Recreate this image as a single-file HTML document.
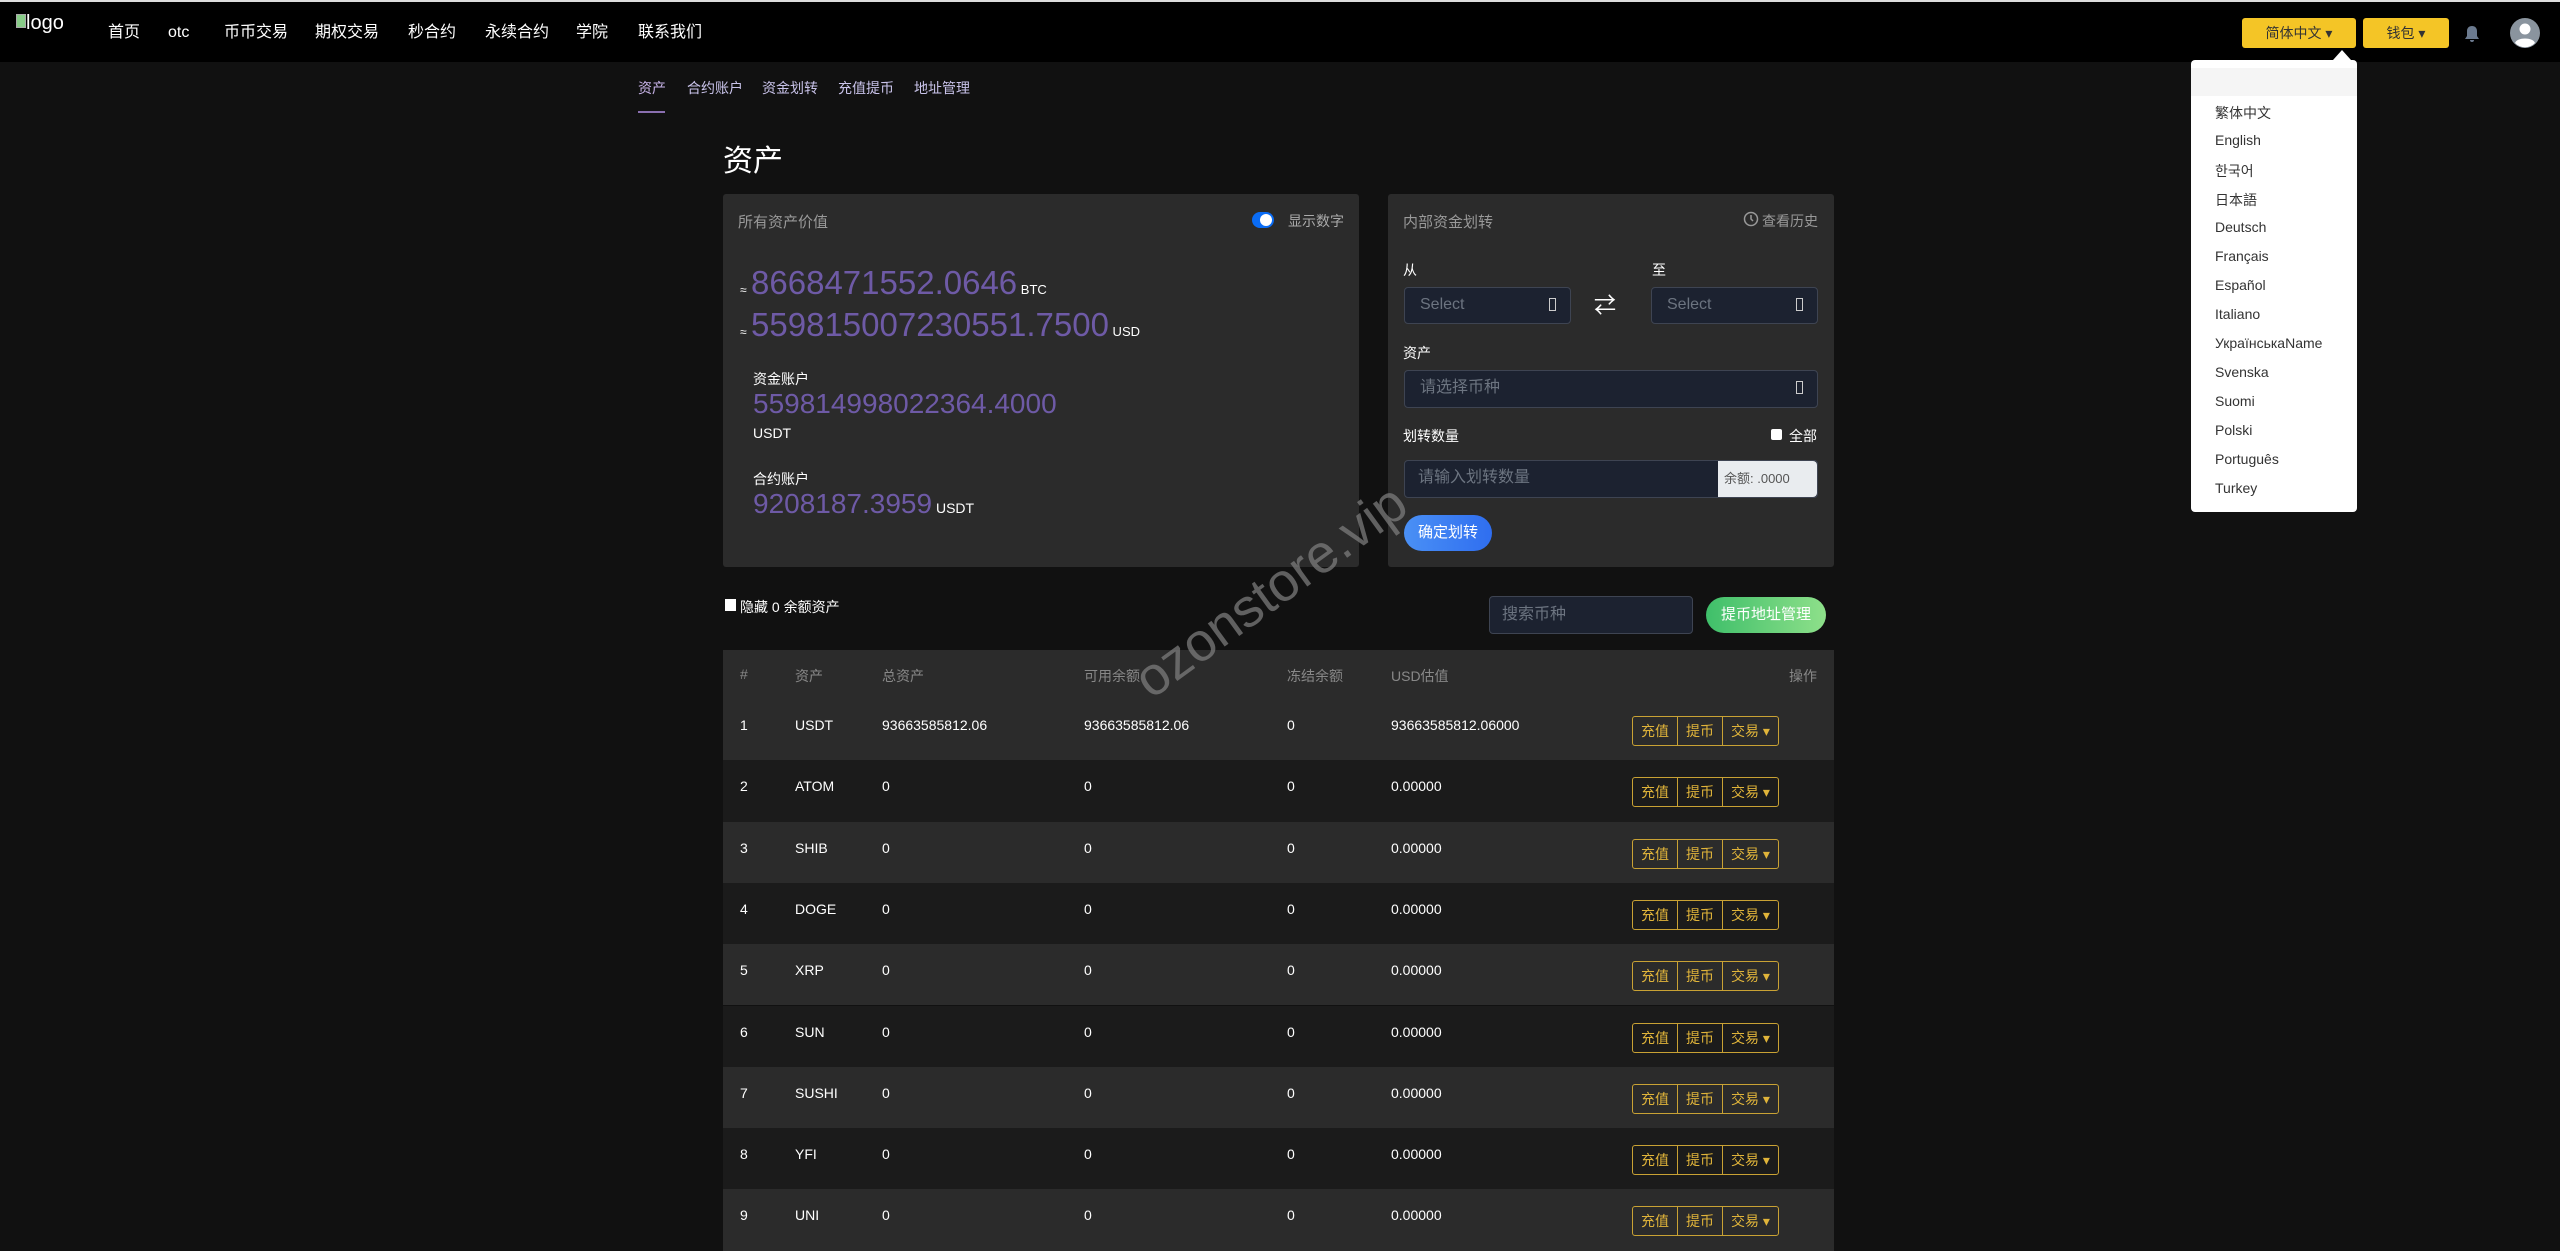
<!DOCTYPE html>
<html><head><meta charset="utf-8">
<style>
*{box-sizing:border-box;margin:0;padding:0}
body{width:2560px;height:1230px;overflow:hidden;background:#111;font-family:"Liberation Sans","Noto Sans CJK SC",sans-serif;color:#fff;position:relative}
.abs{position:absolute}
.nav{left:0;top:0;width:2560px;height:62px;background:#000;border-top:2px solid #ddd}
.nav .it{position:absolute;top:20px;font-size:16px;line-height:22px;height:22px;color:#fff}
.sub{top:78px;font-size:14px;color:#c9c3ea}
.card{background:#2b2b2b;border-radius:3px}
.grey{color:#999}
.purple{color:#6e5aa6}
.sel{position:absolute;background:#1c2230;border:1px solid #3e4452;border-radius:4px;color:#6c7480;font-size:16px;padding-left:15px;line-height:34px}
.sel i{position:absolute;right:14px;top:10px;width:7px;height:13px;border:1.5px solid #ccc;font-style:normal}
.row{position:absolute;left:723px;width:1111px;height:61.3px;font-size:14px}
.row span{position:absolute;top:18px}
.bg{position:absolute;left:1632px;width:147px;height:30px;border:1px solid #c9a234;border-radius:3px;display:flex;font-size:14px;color:#e0b43a}
.bg div{height:28px;line-height:28px;text-align:center}
.dd div{position:absolute;left:24px;font-size:14px;color:#333}
</style></head><body>
<div class="abs nav">
  <div class="abs" style="left:16px;top:10px;font-size:20px;color:#fff"><span style="display:inline-block;width:10px;height:14px;border:1px solid #aaa;background:#8c8;vertical-align:top;margin-top:2px"></span>logo</div>
  <div class="it" style="left:108px">首页</div>
  <div class="it" style="left:168px">otc</div>
  <div class="it" style="left:224px">币币交易</div>
  <div class="it" style="left:315px">期权交易</div>
  <div class="it" style="left:408px">秒合约</div>
  <div class="it" style="left:485px">永续合约</div>
  <div class="it" style="left:576px">学院</div>
  <div class="it" style="left:638px">联系我们</div>
  <div class="abs" style="left:2242px;top:16px;width:114px;height:30px;background:#f4c526;border-radius:3px;color:#333;font-size:14px;text-align:center;line-height:30px">简体中文 ▾</div>
  <div class="abs" style="left:2363px;top:16px;width:86px;height:30px;background:#f4c526;border-radius:3px;color:#333;font-size:14px;text-align:center;line-height:30px">钱包 ▾</div>
  <svg class="abs" style="left:2464px;top:23px" width="16" height="18" viewBox="0 0 16 18"><path d="M8 1c-3 0-5 2-5 5v5l-2 3h14l-2-3V6c0-3-2-5-5-5z M6 15a2 2 0 0 0 4 0z" fill="#6b7a8f"/></svg>
  <svg class="abs" style="left:2510px;top:16px" width="30" height="30" viewBox="0 0 30 30"><circle cx="15" cy="15" r="15" fill="#8a949e"/><circle cx="15" cy="11" r="5.5" fill="#fff"/><path d="M5 25c2-6 18-6 20 0a14 14 0 0 1-20 0z" fill="#fff"/></svg>
</div>
<div class="abs sub" style="left:638px;color:#c9b5ea">资产</div>
<div class="abs" style="left:638px;top:111px;width:27px;height:2px;background:#8a6fb0"></div>
<div class="abs sub" style="left:687px">合约账户</div>
<div class="abs sub" style="left:762px">资金划转</div>
<div class="abs sub" style="left:838px">充值提币</div>
<div class="abs sub" style="left:914px">地址管理</div>
<div class="abs" style="left:723px;top:136px;font-size:30px">资产</div>

<div class="abs card" style="left:723px;top:194px;width:636px;height:373px"></div>
<div class="abs grey" style="left:738px;top:211px;font-size:15px">所有资产价值</div>
<div class="abs" style="left:1252px;top:212px;width:22px;height:16px;border-radius:8px;background:#0a6cf5"><div style="position:absolute;right:2px;top:2px;width:12px;height:12px;border-radius:6px;background:#fff"></div></div>
<div class="abs grey" style="left:1288px;top:211px;font-size:14px;color:#aaa">显示数字</div>
<div class="abs" style="left:740px;top:264px;white-space:nowrap"><span style="font-size:12px">≈</span> <span class="purple" style="font-size:33px">8668471552.0646</span><span style="font-size:13px"> BTC</span></div>
<div class="abs" style="left:740px;top:306px;white-space:nowrap"><span style="font-size:12px">≈</span> <span class="purple" style="font-size:33px">559815007230551.7500</span><span style="font-size:13px"> USD</span></div>
<div class="abs" style="left:753px;top:369px;font-size:14px">资金账户</div>
<div class="abs purple" style="left:753px;top:388px;font-size:28px">559814998022364.4000</div>
<div class="abs" style="left:753px;top:425px;font-size:14px">USDT</div>
<div class="abs" style="left:753px;top:469px;font-size:14px">合约账户</div>
<div class="abs" style="left:753px;top:488px;white-space:nowrap"><span class="purple" style="font-size:28px">9208187.3959</span><span style="font-size:14px"> USDT</span></div>

<div class="abs card" style="left:1388px;top:194px;width:446px;height:373px"></div>
<div class="abs grey" style="left:1403px;top:211px;font-size:15px">内部资金划转</div>
<svg class="abs" style="left:1743px;top:211px" width="16" height="16" viewBox="0 0 16 16"><circle cx="8" cy="8" r="6.5" fill="none" stroke="#999" stroke-width="1.5"/><path d="M8 4v4l2 2" stroke="#999" stroke-width="1.5" fill="none"/></svg>
<div class="abs grey" style="left:1762px;top:211px;font-size:14px">查看历史</div>
<div class="abs" style="left:1403px;top:260px;font-size:14px">从</div>
<div class="abs" style="left:1652px;top:260px;font-size:14px">至</div>
<div class="sel" style="left:1404px;top:287px;width:167px;height:37px">Select<i></i></div>
<div class="abs" style="left:1594px;top:288px;font-size:22px;color:#fff">⇄</div>
<div class="sel" style="left:1651px;top:287px;width:167px;height:37px">Select<i></i></div>
<div class="abs" style="left:1403px;top:343px;font-size:14px">资产</div>
<div class="sel" style="left:1404px;top:370px;width:414px;height:38px">请选择币种<i></i></div>
<div class="abs" style="left:1403px;top:426px;font-size:14px">划转数量</div>
<div class="abs" style="left:1771px;top:429px;width:11px;height:11px;background:#fff;border-radius:2px"></div>
<div class="abs" style="left:1789px;top:426px;font-size:14px">全部</div>
<div class="sel" style="left:1404px;top:460px;width:414px;height:38px;padding-left:13px">请输入划转数量</div>
<div class="abs" style="left:1718px;top:461px;width:99px;height:36px;background:#e9ecef;border-radius:0 4px 4px 0;color:#555;font-size:13px;line-height:36px;padding-left:6px">余额: .0000</div>
<div class="abs" style="left:1404px;top:515px;width:88px;height:36px;border-radius:18px;background:linear-gradient(90deg,#4a90f5,#2f6ef0);font-size:15px;line-height:36px;text-align:center">确定划转</div>

<div class="abs" style="left:725px;top:599px;width:11px;height:12px;background:#fff"></div>
<div class="abs" style="left:740px;top:597px;font-size:14px">隐藏 0 余额资产</div>
<div class="abs" style="left:1489px;top:596px;width:204px;height:38px;background:#1c2230;border:1px solid #3e4452;border-radius:4px;color:#6c7480;font-size:16px;line-height:36px;padding-left:12px">搜索币种</div>
<div class="abs" style="left:1706px;top:597px;width:120px;height:36px;border-radius:18px;background:linear-gradient(90deg,#3fbf6a,#8ee08a);font-size:15px;line-height:36px;text-align:center">提币地址管理</div>

<div class="abs" style="left:723px;top:650px;width:1111px;height:49px;background:#2b2b2b;font-size:14px;color:#888">
  <span class="abs" style="left:17px;top:16px">#</span><span class="abs" style="left:72px;top:16px">资产</span><span class="abs" style="left:159px;top:16px">总资产</span><span class="abs" style="left:361px;top:16px">可用余额</span><span class="abs" style="left:564px;top:16px">冻结余额</span><span class="abs" style="left:668px;top:16px">USD估值</span><span class="abs" style="right:17px;top:16px">操作</span>
</div>

<div class="row" style="top:699px;background:#2b2b2b"><span style="left:17px">1</span><span style="left:72px">USDT</span><span style="left:159px">93663585812.06</span><span style="left:361px">93663585812.06</span><span style="left:564px">0</span><span style="left:668px">93663585812.06000</span></div>
<div class="row" style="top:760.3px;background:#1b1b1b"><span style="left:17px">2</span><span style="left:72px">ATOM</span><span style="left:159px">0</span><span style="left:361px">0</span><span style="left:564px">0</span><span style="left:668px">0.00000</span></div>
<div class="row" style="top:821.6px;background:#2b2b2b"><span style="left:17px">3</span><span style="left:72px">SHIB</span><span style="left:159px">0</span><span style="left:361px">0</span><span style="left:564px">0</span><span style="left:668px">0.00000</span></div>
<div class="row" style="top:882.9px;background:#1b1b1b"><span style="left:17px">4</span><span style="left:72px">DOGE</span><span style="left:159px">0</span><span style="left:361px">0</span><span style="left:564px">0</span><span style="left:668px">0.00000</span></div>
<div class="row" style="top:944.2px;background:#2b2b2b"><span style="left:17px">5</span><span style="left:72px">XRP</span><span style="left:159px">0</span><span style="left:361px">0</span><span style="left:564px">0</span><span style="left:668px">0.00000</span></div>
<div class="row" style="top:1005.5px;background:#1b1b1b"><span style="left:17px">6</span><span style="left:72px">SUN</span><span style="left:159px">0</span><span style="left:361px">0</span><span style="left:564px">0</span><span style="left:668px">0.00000</span></div>
<div class="row" style="top:1066.8px;background:#2b2b2b"><span style="left:17px">7</span><span style="left:72px">SUSHI</span><span style="left:159px">0</span><span style="left:361px">0</span><span style="left:564px">0</span><span style="left:668px">0.00000</span></div>
<div class="row" style="top:1128.1px;background:#1b1b1b"><span style="left:17px">8</span><span style="left:72px">YFI</span><span style="left:159px">0</span><span style="left:361px">0</span><span style="left:564px">0</span><span style="left:668px">0.00000</span></div>
<div class="row" style="top:1189.4px;background:#2b2b2b"><span style="left:17px">9</span><span style="left:72px">UNI</span><span style="left:159px">0</span><span style="left:361px">0</span><span style="left:564px">0</span><span style="left:668px">0.00000</span></div>

<div class="bg" style="top:716px"><div style="width:45px;border-right:1px solid #c9a234">充值</div><div style="width:45px;border-right:1px solid #c9a234">提币</div><div style="flex:1">交易 ▾</div></div>
<div class="bg" style="top:777.3px"><div style="width:45px;border-right:1px solid #c9a234">充值</div><div style="width:45px;border-right:1px solid #c9a234">提币</div><div style="flex:1">交易 ▾</div></div>
<div class="bg" style="top:838.6px"><div style="width:45px;border-right:1px solid #c9a234">充值</div><div style="width:45px;border-right:1px solid #c9a234">提币</div><div style="flex:1">交易 ▾</div></div>
<div class="bg" style="top:899.9px"><div style="width:45px;border-right:1px solid #c9a234">充值</div><div style="width:45px;border-right:1px solid #c9a234">提币</div><div style="flex:1">交易 ▾</div></div>
<div class="bg" style="top:961.2px"><div style="width:45px;border-right:1px solid #c9a234">充值</div><div style="width:45px;border-right:1px solid #c9a234">提币</div><div style="flex:1">交易 ▾</div></div>
<div class="bg" style="top:1022.5px"><div style="width:45px;border-right:1px solid #c9a234">充值</div><div style="width:45px;border-right:1px solid #c9a234">提币</div><div style="flex:1">交易 ▾</div></div>
<div class="bg" style="top:1083.8px"><div style="width:45px;border-right:1px solid #c9a234">充值</div><div style="width:45px;border-right:1px solid #c9a234">提币</div><div style="flex:1">交易 ▾</div></div>
<div class="bg" style="top:1145.1px"><div style="width:45px;border-right:1px solid #c9a234">充值</div><div style="width:45px;border-right:1px solid #c9a234">提币</div><div style="flex:1">交易 ▾</div></div>
<div class="bg" style="top:1206.4px"><div style="width:45px;border-right:1px solid #c9a234">充值</div><div style="width:45px;border-right:1px solid #c9a234">提币</div><div style="flex:1">交易 ▾</div></div>

<div class="abs" style="left:1110px;top:560px;font-size:54px;color:rgba(130,130,130,0.7);transform:rotate(-36deg);transform-origin:center;white-space:nowrap;font-weight:normal">ozonstore.vip</div>

<div class="abs dd" style="left:2191px;top:60px;width:166px;height:452px;background:#fff;border-radius:4px">
  <div style="left:0;top:8px;width:166px;height:28px;background:#f5f5f5"></div>
  <div style="top:43px">繁体中文</div>
  <div style="top:72px">English</div>
  <div style="top:101px">한국어</div>
  <div style="top:130px">日本語</div>
  <div style="top:159px">Deutsch</div>
  <div style="top:188px">Français</div>
  <div style="top:217px">Español</div>
  <div style="top:246px">Italiano</div>
  <div style="top:275px">УкраїнськаName</div>
  <div style="top:304px">Svenska</div>
  <div style="top:333px">Suomi</div>
  <div style="top:362px">Polski</div>
  <div style="top:391px">Português</div>
  <div style="top:420px">Turkey</div>
</div>
<div class="abs" style="left:2333px;top:50px;width:0;height:0;border-left:9px solid transparent;border-right:9px solid transparent;border-bottom:10px solid #fff"></div>
</body></html>
